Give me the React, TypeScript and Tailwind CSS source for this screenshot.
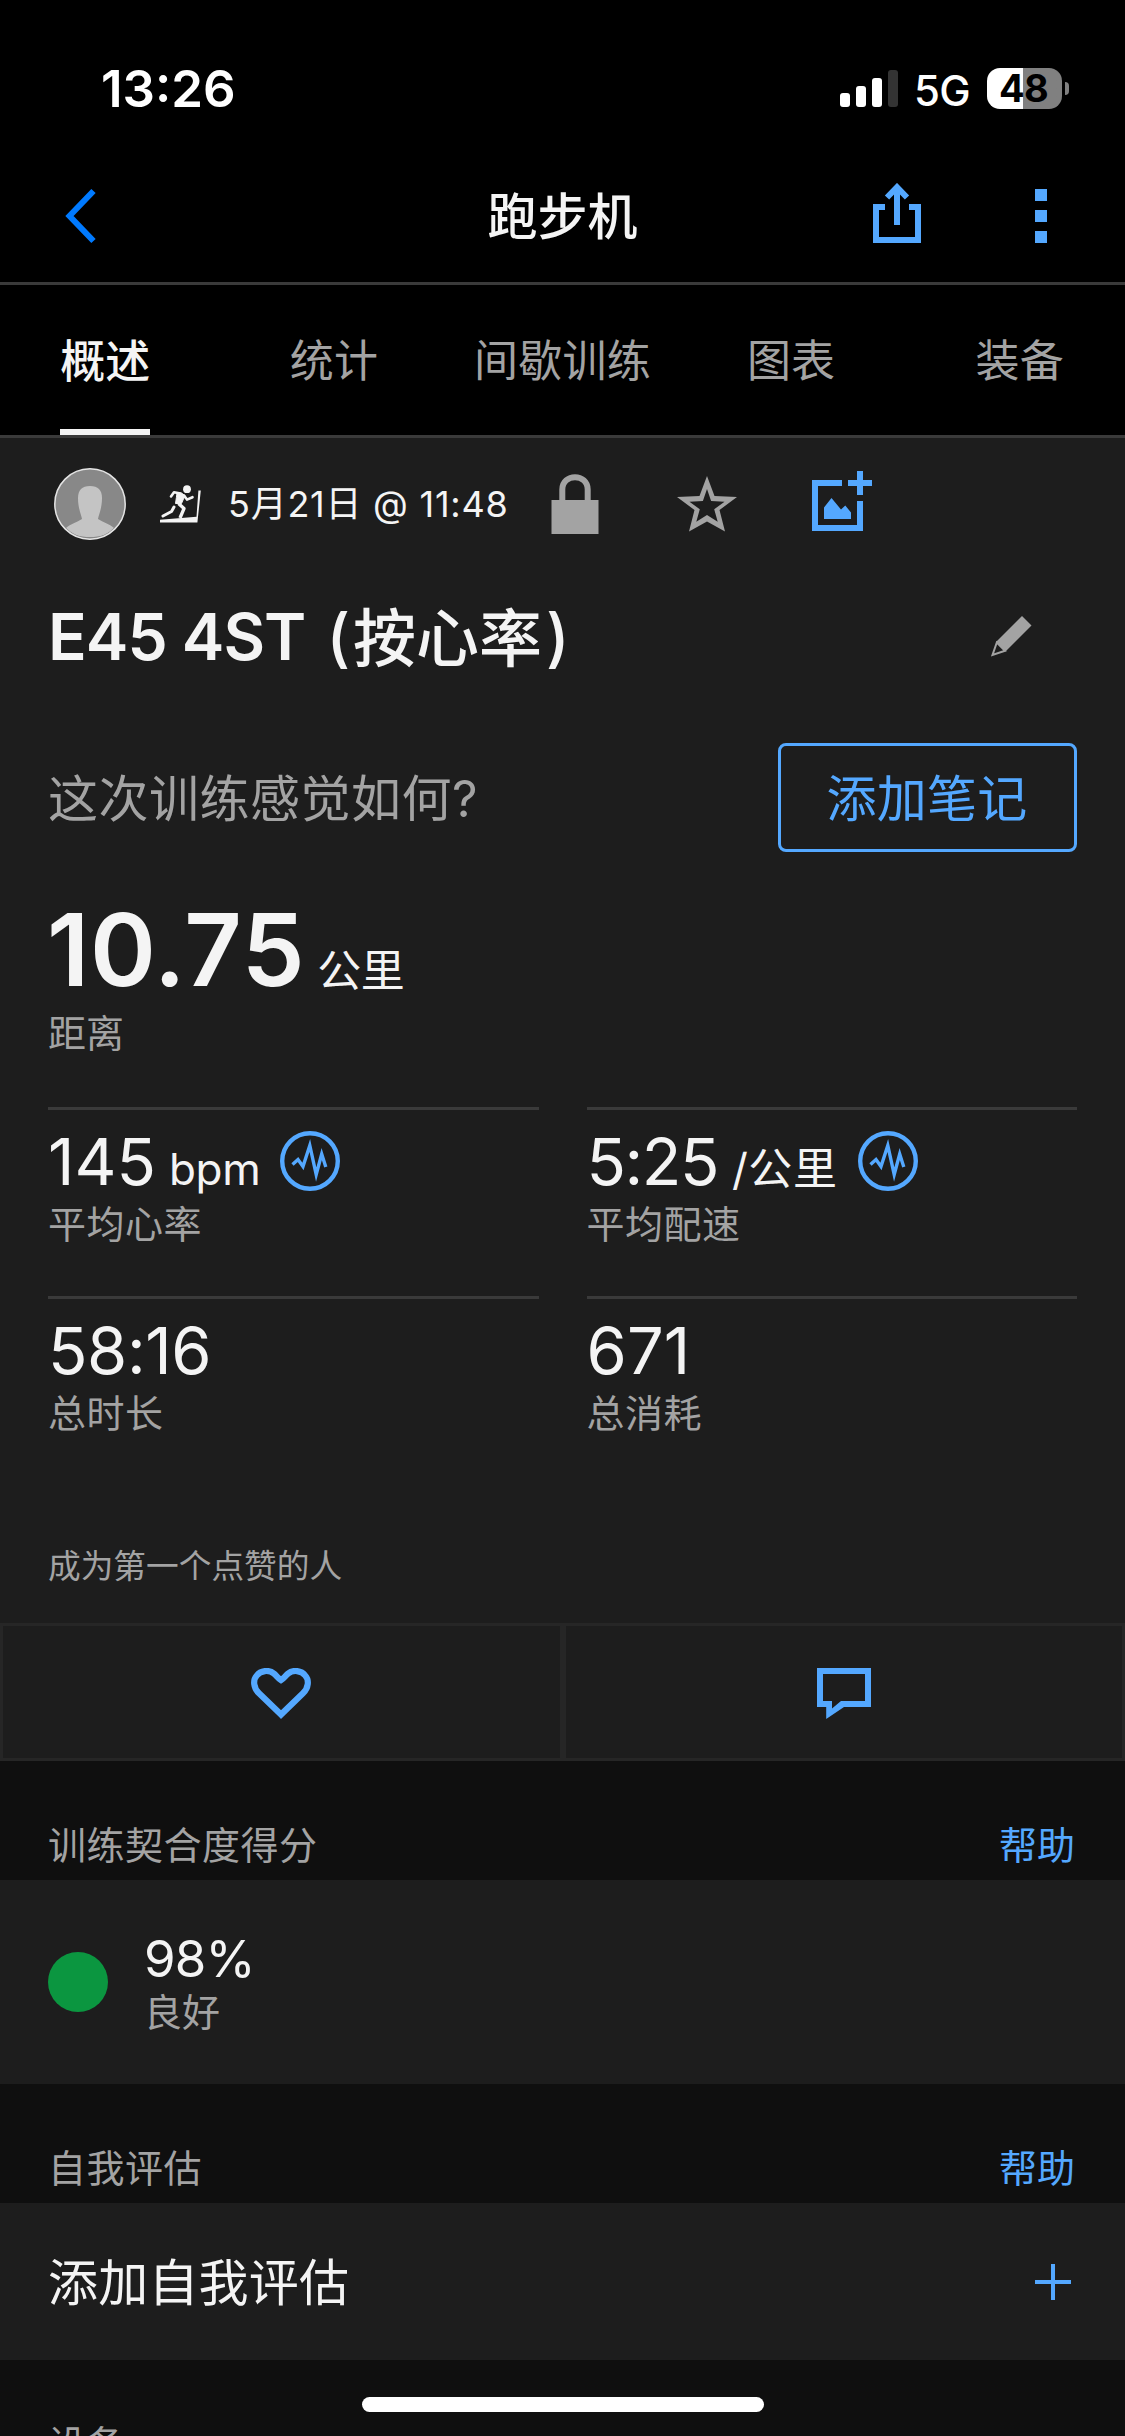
import type { ReactNode } from "react";

const tabs = ["概述", "统计", "间歇训练", "图表", "装备"];

function StatusBar() {
  return (
    <div className="flex h-[141px] items-start pr-[56px] pl-[101px] text-white">
      <div className="mt-[64px] text-[51px] leading-[50px] font-semibold">13:26</div>
      <div className="mt-[68px] ml-auto flex h-[41px] items-center">
        <div className="flex h-[37px] items-end gap-[6px]">
          <div className="h-[14px] w-[10px] rounded-[3px] bg-white" />
          <div className="h-[21px] w-[10px] rounded-[3px] bg-white" />
          <div className="h-[29px] w-[10px] rounded-[3px] bg-white" />
          <div className="h-[37px] w-[10px] rounded-[3px] bg-[#333333]" />
        </div>
        <div className="ml-[16px] w-[56px] pt-[3px] text-[42px] leading-[41px] font-medium tracking-[-0.8px]">5G</div>
        <div className="ml-[17px] flex h-[41px] w-[75px] items-center justify-center rounded-[13px] bg-linear-to-r from-white from-48% to-[#808080] to-48% pr-[2px] text-[38px] font-bold tracking-[-0.6px] text-black">
          48
        </div>
        <div className="ml-[3px] h-[13px] w-[4px] rounded-r-full bg-[#808080]" />
      </div>
    </div>
  );
}

function NavBar() {
  return (
    <div className="grid h-[141px] grid-cols-3 items-center">
      <svg className="mt-[8px] ml-[63px] h-[56px] w-[36px]" viewBox="0 0 36 56" fill="none" stroke="#007aff" strokeWidth="6">
        <path d="M30.5 3 L6.5 28 L30.5 53" />
      </svg>
      <div className="pt-[11px] text-center text-[50px] leading-[60px] font-medium text-[#f4f4f4]">跑步机</div>
      <div className="flex items-center justify-end pt-[2px] pr-[78px]">
        <svg className="h-[60px] w-[48px]" viewBox="0 0 48 60" fill="none" stroke="#54a8ff" strokeWidth="6">
          <path d="M12 24 H3 V57 H45 V24 H36" />
          <path d="M24 42 V5" />
          <path d="M14 14.5 L24 4.2 L34 14.5" />
        </svg>
        <div className="ml-[114px] flex flex-col gap-[9px] pt-[6px]">
          <div className="size-[12px] bg-[#54a8ff]" />
          <div className="size-[12px] bg-[#54a8ff]" />
          <div className="size-[12px] bg-[#54a8ff]" />
        </div>
      </div>
    </div>
  );
}

function TabBar() {
  return (
    <div className="h-[156px] overflow-hidden border-y-[3px] border-[#3a3a3a]">
      <div className="-mx-[9px] grid h-[150px] grid-cols-5 justify-items-center">
        {tabs.map((t, i) => (
          <div
            key={t}
            className={
              i === 0
                ? "h-[150px] border-b-[6px] border-[#f4f4f4] text-[45px] leading-[153px] font-medium whitespace-nowrap text-[#f4f4f4]"
                : "h-[150px] text-[44px] leading-[153px] tracking-[0.2px] whitespace-nowrap text-[#a3a3a3]"
            }
          >
            {t}
          </div>
        ))}
      </div>
    </div>
  );
}

function Avatar() {
  return (
    <svg className="size-[72px]" viewBox="0 0 72 72">
      <defs>
        <clipPath id="avatar">
          <circle cx="36" cy="36" r="34" />
        </clipPath>
      </defs>
      <circle cx="36" cy="36" r="35.2" fill="#888" stroke="#e4e4e4" strokeWidth="1.5" />
      <g clipPath="url(#avatar)" fill="#c4c4c4">
        <path d="M36 18 C44 18 48 22 48 30 C48 40 45 46 44 51 C50 55 56 56 60 60 C54 67 46 69 36 69 C26 69 18 67 12 60 C16 56 22 55 28 51 C27 46 24 40 24 30 C24 22 28 18 36 18Z" />
      </g>
    </svg>
  );
}

function Treadmill() {
  return (
    <svg className="ml-[34px] h-[38px] w-[41px]" viewBox="0 0 41 38" fill="none" stroke="#f4f4f4">
      <circle cx="27" cy="4.2" r="3.9" fill="#f4f4f4" stroke="none" />
      <path d="M0 34.8 L36.5 31.8 L38.4 5.5 H40.8 L37.4 37.5 H0Z" fill="#f4f4f4" stroke="none" />
      <path d="M11 11.5 L14 7.2 L20.5 8.5" strokeWidth="2.6" strokeLinejoin="round" strokeLinecap="round" />
      <path d="M17 8 Q22 7 25 10.5 L21.5 18.5 L15.5 18.5 Q16.5 12 17 8Z" fill="#f4f4f4" strokeWidth="1" />
      <path d="M24 10.5 L27 14.6 L32.5 12.2" strokeWidth="2.6" strokeLinejoin="round" strokeLinecap="round" />
      <path d="M18.5 18.5 L24 23.5 L20 33" strokeWidth="3.3" strokeLinejoin="round" />
      <path d="M14 22 L11.5 26.5 L3 31" strokeWidth="3" strokeLinejoin="round" strokeLinecap="round" />
    </svg>
  );
}

function ActivityMeta() {
  return (
    <div className="flex h-[132px] items-center pl-[54px]">
      <Avatar />
      <Treadmill />
      <div className="ml-[27px] w-[285px] text-[36px] leading-[50px] tracking-[0.75px] whitespace-nowrap text-[#f4f4f4]">
        5月21日 @ 11:48
      </div>
      <svg className="ml-[38px] h-[60px] w-[48px]" viewBox="0 0 48 60">
        <rect x="0.5" y="26" width="47" height="34" fill="#a3a3a3" />
        <path d="M11.3 28 V15.5 C11.3 -1 36.7 -1 36.7 15.5 V28" fill="none" stroke="#a3a3a3" strokeWidth="6" />
      </svg>
      <svg className="ml-[78px] h-[56px] w-[60px]" viewBox="0 0 60 56" fill="#a3a3a3">
        <path
          fillRule="evenodd"
          d="M30 0 L37.5 20 L60 21 L42.5 34 L48 55.5 L30 45.5 L12 55.5 L17.5 34 L0 21 L22.5 20Z M30 13 L25.9 24.9 L12.5 25.7 L22.8 33.3 L19.3 45.8 L30 39 L40.7 45.8 L37.2 33.3 L47.5 25.7 L34.1 24.9Z"
        />
      </svg>
      <svg className="-mt-[6px] ml-[75px] h-[60px] w-[60px]" viewBox="0 0 60 60" fill="#54a8ff">
        <path d="M0 9 H30 V15 H6 V54 H45 V30 H51 V60 H0Z" />
        <path d="M45 0 H51 V9 H60 V15 H51 V24 H45 V15 H36 V9 H45Z" />
        <path d="M12 48 V36.5 L19.5 27 L29 38.5 L33.3 34.5 L39 41.5 V48Z" />
      </svg>
    </div>
  );
}

function ActivityTitle() {
  return (
    <div className="flex h-[134px] items-center justify-between pr-[93px] pl-[48px]">
      <h1 className="flex items-center text-[64px] leading-[80px] font-semibold text-[#f4f4f4]">
        <span className="tracking-[-1px] whitespace-pre">E45 4ST </span>
        <span className="ml-[6px] font-medium">(</span>
        <span className="mr-[4px] ml-[3px] pt-[1px] text-[63px] font-medium">按心率</span>
        <span className="font-medium">)</span>
      </h1>
      <svg className="-mt-[2px] h-[41px] w-[41px]" viewBox="0 0 41 41">
        <path d="M31 0 L40.5 9.5 L14.5 35.5 L5 26Z" fill="#a3a3a3" />
        <path d="M5.8 26.5 L1.5 39 L14 34.8Z" fill="none" stroke="#a3a3a3" strokeWidth="2" />
      </svg>
    </div>
  );
}

function WaveBadge() {
  return (
    <svg className="size-[60px]" viewBox="0 0 60 60" fill="none" stroke="#54a8ff">
      <circle cx="30" cy="30" r="27.8" strokeWidth="4.4" />
      <path d="M12.5 33.5 L18 28.5 L23 35.5 L29.8 14.5 L36.2 43.5 L41.7 23 L45.8 36" strokeWidth="3.4" strokeMiterlimit="10" />
    </svg>
  );
}

type StatProps = { value: string; unit?: string; label: string; wave?: boolean; valueClass: string; unitClass?: string };

function Stat({ value, unit, label, wave, valueClass, unitClass = "" }: StatProps) {
  return (
    <div className="h-[189px] border-t-[3px] border-[#3a3a3a] pt-[21px]">
      <div className="flex h-[62px] items-center">
        <div className="flex items-baseline text-[#f4f4f4]">
          <span className={`text-[65px] leading-[62px] ${valueClass}`}>{value}</span>
          {unit && <span className={`text-[44px] leading-[44px] ${unitClass}`}>{unit}</span>}
        </div>
        {wave && (
          <div className="-mt-[2px] ml-[20px]">
            <WaveBadge />
          </div>
        )}
      </div>
      <div className="mt-[6px] text-[38px] leading-[50px] tracking-[0.5px] text-[#a3a3a3]">{label}</div>
    </div>
  );
}

function SectionHead({ title, help }: { title: string; help?: boolean }) {
  return (
    <div className="flex h-[119px] shrink-0 items-start justify-between pt-[59px] pr-[50px] pl-[48px] text-[38px] leading-[50px]">
      <span className="tracking-[0.5px] text-[#a3a3a3]">{title}</span>
      {help && <span className="text-[#54a8ff]">帮助</span>}
    </div>
  );
}

function Action({ children }: { children: ReactNode }) {
  return <div className="flex flex-1 justify-center border-[3px] border-[#262626] bg-[#1d1d1d] pt-[42px]">{children}</div>;
}

export default function App() {
  return (
    <div className="relative flex h-[2436px] w-[1125px] flex-col overflow-hidden bg-[#0f0f0f] font-['Inter','Noto_Sans_CJK_SC',sans-serif]">
      <header className="shrink-0 bg-black">
        <StatusBar />
        <NavBar />
        <TabBar />
      </header>

      <section className="h-[1185px] shrink-0 bg-[#1d1d1d]">
        <ActivityMeta />
        <ActivityTitle />
        <div className="mt-[39px] flex h-[109px] items-center justify-between px-[48px]">
          <span className="pt-[3px] text-[50px] tracking-[0.5px] text-[#a3a3a3]">这次训练感觉如何?</span>
          <div className="flex h-[109px] w-[299px] items-center justify-center rounded-[8px] border-[3px] border-[#54a8ff] pt-[3px] pr-[1px] text-[50px] tracking-[0.2px] text-[#54a8ff]">
            添加笔记
          </div>
        </div>
        <div className="mt-[57px] flex h-[80px] items-baseline pl-[47px] text-[#f4f4f4]">
          <span className="text-[100px] leading-[82px] font-semibold tracking-[0.7px]">10.75</span>
          <span className="relative top-[1px] ml-[12px] text-[44px] leading-[60px] tracking-[-0.5px]">公里</span>
        </div>
        <div className="mt-[19px] pl-[48px] text-[38px] leading-[50px] text-[#a3a3a3]">距离</div>
        <div className="mt-[49px] grid grid-cols-2 gap-x-[48px] px-[48px]">
          <Stat value="145" unit="bpm" label="平均心率" wave valueClass="mr-[13px]" unitClass="tracking-[-0.3px]" />
          <Stat
            value="5:25"
            unit="/公里"
            label="平均配速"
            wave
            valueClass="mr-[14px] tracking-[-1.5px]"
            unitClass="tracking-[0.6px]"
          />
          <Stat value="58:16" label="总时长" valueClass="tracking-[-0.4px]" />
          <Stat value="671" label="总消耗" valueClass="tracking-[0.1px]" />
        </div>
        <div className="mt-[56px] pl-[48px] text-[32.7px] leading-[50px] text-[#a3a3a3]">成为第一个点赞的人</div>
      </section>
      <div className="flex h-[138px] shrink-0">
        <Action>
          <svg className="h-[51px] w-[60px]" viewBox="0 0 60 51" fill="none" stroke="#54a8ff" strokeWidth="6.2">
            <path d="M30 46.6 L8 25.3 C2.5 20 1.6 12 5.8 7.5 C9.5 2.4 18 1.4 23 5.6 C25.5 7.8 28 11 30 12.2 C32 11 34.5 7.8 37 5.6 C42 1.4 50.5 2.4 54.2 7.5 C58.4 12 57.5 20 52 25.3Z" />
          </svg>
        </Action>
        <Action>
          <svg className="h-[51px] w-[54px]" viewBox="0 0 54 51" fill="#54a8ff">
            <path fillRule="evenodd" d="M0 0 H54 V39 H27 L9.2 51 V39 H0Z M6 6 V33 H15 V40.5 L24 33 H48 V6Z" />
          </svg>
        </Action>
      </div>

      <SectionHead title="训练契合度得分" help />
      <section className="flex h-[204px] shrink-0 items-center bg-[#1d1d1d] pl-[48px]">
        <div className="size-[60px] rounded-full bg-[#0b9640]" />
        <div className="ml-[36px] pt-[7px]">
          <div className="text-[51px] leading-[54px] tracking-[-0.8px] text-[#f4f4f4]">98%</div>
          <div className="text-[38px] leading-[53px] text-[#a3a3a3]">良好</div>
        </div>
      </section>

      <SectionHead title="自我评估" help />
      <section className="flex h-[157px] shrink-0 items-center justify-between bg-[#1d1d1d] pr-[54px] pl-[48px]">
        <span className="pt-[3px] text-[50px] tracking-[0.2px] text-[#f4f4f4]">添加自我评估</span>
        <svg className="size-[36px]" viewBox="0 0 36 36" stroke="#54a8ff" strokeWidth="4">
          <path d="M18 0 V36 M0 18 H36" />
        </svg>
      </section>

      <SectionHead title="设备" />
      <div className="absolute bottom-[24px] left-[362px] h-[15px] w-[402px] rounded-full bg-white" />
    </div>
  );
}
